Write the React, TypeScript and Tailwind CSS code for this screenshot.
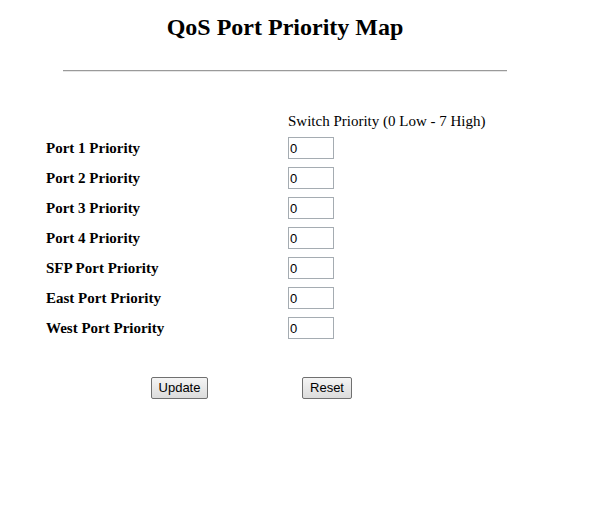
const ports = [
  'Port 1 Priority',
  'Port 2 Priority',
  'Port 3 Priority',
  'Port 4 Priority',
  'SFP Port Priority',
  'East Port Priority',
  'West Port Priority',
];

export default function App() {
  return (
    <div className="h-[506px] w-[595px] bg-white font-['Liberation_Serif',serif] text-black">
      <div className="w-[570px] pt-[13px] text-center">
        <h1 className="text-[24px] leading-[28px] font-bold">QoS Port Priority Map</h1>
      </div>
      <div className="ml-[63px] mt-[29px] h-[2px] w-[444px] border-t border-[#9a9a9a] border-b border-b-[#e6e6e6]" />

      <div className="ml-[46px] mt-[37px]">
        <div className="grid grid-cols-[242px_auto]">
          <div />
          <div className="h-[24px] text-[15px] leading-[24px]">Switch Priority (0 Low - 7 High)</div>
          {ports.map((label) => (
            <div key={label} className="contents">
              <div className="flex h-[30px] items-center text-[15px] font-bold">{label}</div>
              <div className="flex h-[30px] items-center">
                <input
                  defaultValue="0"
                  className="h-[22px] w-[46px] border border-[#a5acb2] bg-white px-[1px] font-['Liberation_Sans',sans-serif] text-[13px] text-black outline-none"
                />
              </div>
            </div>
          ))}
        </div>
      </div>

      <div className="mt-[34px] flex font-['Liberation_Sans',sans-serif] text-[13px]">
        <button className="ml-[151px] h-[22px] w-[57px] rounded-[2px] border border-[#707070] bg-gradient-to-b from-[#f4f4f4] to-[#dcdcdc] text-black">
          Update
        </button>
        <button className="ml-[94px] h-[22px] w-[50px] rounded-[2px] border border-[#707070] bg-gradient-to-b from-[#f4f4f4] to-[#dcdcdc] text-black">
          Reset
        </button>
      </div>
    </div>
  );
}
